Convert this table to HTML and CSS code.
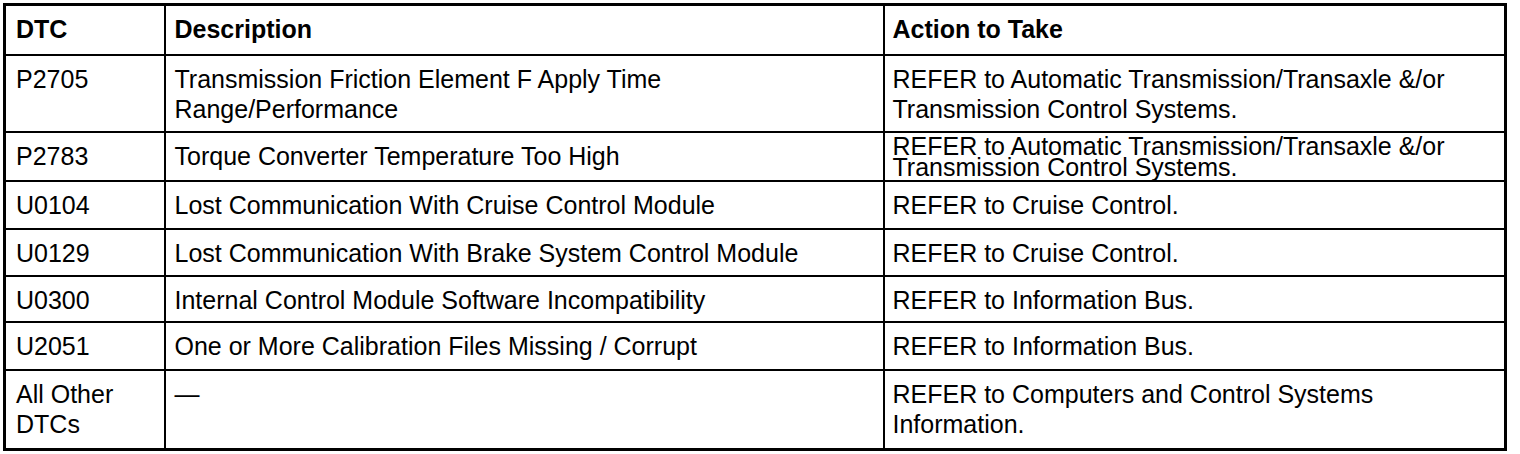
FILE: index.html
```html
<!DOCTYPE html>
<html>
<head>
<meta charset="utf-8">
<link rel="stylesheet" href="styles.css">
</head>
<body>
<table class="dtc-table">
  <colgroup>
    <col class="c-dtc">
    <col class="c-desc">
    <col class="c-action">
  </colgroup>
  <thead>
    <tr class="r-head">
      <th class="first">DTC</th>
      <th class="mid">Description</th>
      <th>Action to Take</th>
    </tr>
  </thead>
  <tbody>
    <tr class="r-1">
      <td class="first">P2705</td>
      <td class="mid">Transmission Friction Element F Apply Time<br>Range/Performance</td>
      <td>REFER to Automatic Transmission/Transaxle &amp;/or<br>Transmission Control Systems.</td>
    </tr>
    <tr class="r-2">
      <td class="first">P2783</td>
      <td class="mid">Torque Converter Temperature Too High</td>
      <td class="tight">REFER to Automatic Transmission/Transaxle &amp;/or<br>Transmission Control Systems.</td>
    </tr>
    <tr class="r-3">
      <td class="first">U0104</td>
      <td class="mid">Lost Communication With Cruise Control Module</td>
      <td>REFER to Cruise Control.</td>
    </tr>
    <tr class="r-4">
      <td class="first">U0129</td>
      <td class="mid">Lost Communication With Brake System Control Module</td>
      <td>REFER to Cruise Control.</td>
    </tr>
    <tr class="r-5">
      <td class="first">U0300</td>
      <td class="mid">Internal Control Module Software Incompatibility</td>
      <td>REFER to Information Bus.</td>
    </tr>
    <tr class="r-6">
      <td class="first">U2051</td>
      <td class="mid">One or More Calibration Files Missing / Corrupt</td>
      <td>REFER to Information Bus.</td>
    </tr>
    <tr class="r-7">
      <td class="first">All Other<br>DTCs</td>
      <td class="mid">—</td>
      <td>REFER to Computers and Control Systems<br>Information.</td>
    </tr>
  </tbody>
</table>
</body>
</html>
```

FILE: styles.css
```css
html, body {
  margin: 0;
  padding: 0;
  background: #ffffff;
}

body {
  padding: 3px 0 0 3px;
  font-family: "Liberation Sans", Arial, sans-serif;
  color: #000000;
}

.dtc-table {
  border-collapse: collapse;
  table-layout: fixed;
  width: 1504px;
  border: 3px solid #000;
  font-size: 25px;
  line-height: 30px;
}

.c-dtc { width: 160px; }
.c-desc { width: 719px; }
.c-action { width: auto; }

.dtc-table th,
.dtc-table td {
  border: 2px solid #000;
  padding: 8px 6px 0 8px;
  text-align: left;
  vertical-align: top;
  white-space: nowrap;
}

.dtc-table .first {
  padding-left: 10px;
}

.dtc-table .mid {
  padding-left: 9px;
}

.dtc-table th {
  font-weight: bold;
}

.dtc-table td.tight {
  line-height: 21px;
  padding-top: 3px;
}

.r-head { height: 50px; }
.r-1 { height: 77px; }
.r-2 { height: 49px; }
.r-3 { height: 48px; }
.r-4 { height: 47px; }
.r-5 { height: 46px; }
.r-6 { height: 48px; }
.r-7 { height: 80px; }
```
